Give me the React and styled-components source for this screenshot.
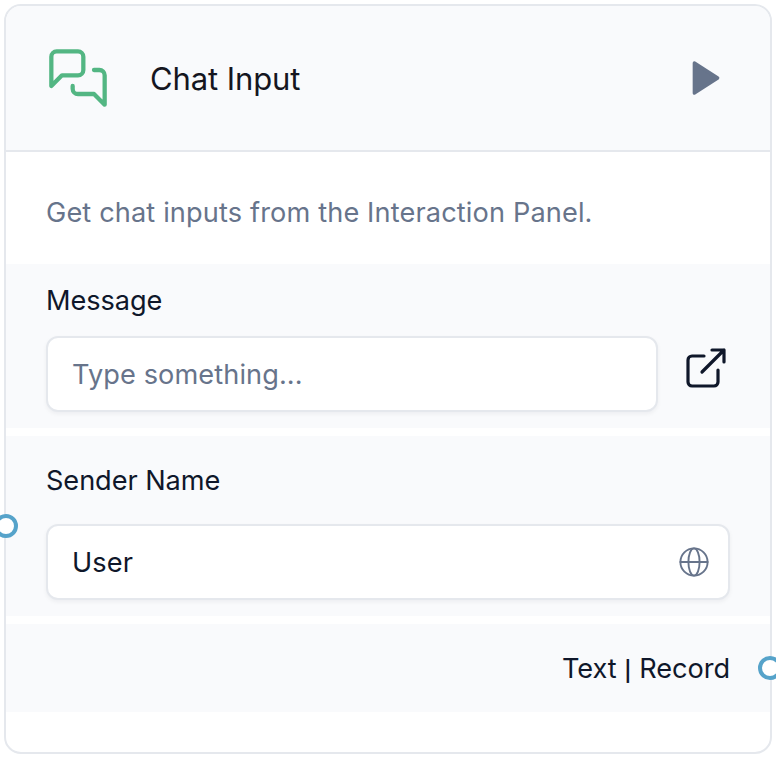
import React from "react";
import styled, { createGlobalStyle } from "styled-components";

const GlobalStyle = createGlobalStyle`
  * { box-sizing: border-box; }
  html, body { margin: 0; background: #fff; overflow: hidden; }
  body { font-family: Inter, "Liberation Sans", sans-serif; color: #0f172a; }
`;

const Canvas = styled.main`
  width: 776px;
  height: 758px;
  padding: 4px;
  overflow: hidden;
`;

const NodeCard = styled.article`
  width: 768px;
  height: 750px;
  display: flex;
  flex-direction: column;
  background: #fff;
  border: 2px solid #e5e8ed;
  border-radius: 17px;
`;

const Header = styled.header`
  height: 146px;
  flex: none;
  display: flex;
  align-items: center;
  padding: 0 44px 0 40px;
  background: #f9fafc;
  border-bottom: 2px solid #e5e8ed;
  border-radius: 15px 15px 0 0;
`;

const Title = styled.h1`
  margin: 2px 0 0 40px;
  flex: 1;
  font-size: 31px;
  line-height: 40px;
  font-weight: 400;
  letter-spacing: -0.1px;
  color: #15161f;
`;

const RunButton = styled.button`
  width: 40px;
  height: 40px;
  padding: 0;
  border: 0;
  background: none;
`;

const Icon = styled.svg`
  display: block;
  flex: none;
  fill: none;
  stroke: currentColor;
  stroke-linecap: round;
  stroke-linejoin: round;
`;

const ChatIcon = styled(Icon)`
  color: #53b683;
`;

const PlayIcon = styled(Icon)`
  color: #67748b;
  fill: currentColor;
`;

const Description = styled.p`
  margin: 0;
  height: 112px;
  flex: none;
  padding: 41px 40px 0;
  font-size: 27.15px;
  line-height: 40px;
  letter-spacing: 0.14px;
  color: #67748b;
`;

const Section = styled.section`
  position: relative;
  height: ${(p) => p.$height}px;
  flex: none;
  padding: ${(p) => p.$top}px 40px 0;
  margin-bottom: 8px;
  background: #f9fafc;
`;

const Label = styled.div`
  font-size: 27.15px;
  line-height: 40px;
  letter-spacing: -0.05px;
  margin-bottom: ${(p) => p.$gap}px;
`;

const Divider = styled.span`
  font-size: 20px;
  font-weight: 600;
  margin: 0 0.2px;
`;

const FieldRow = styled.div`
  display: flex;
  align-items: center;
`;

const Field = styled.div`
  display: flex;
  align-items: center;
  justify-content: space-between;
  width: ${(p) => p.$width}px;
  height: 76px;
  padding: 1px 19px 0 24px;
  border: 2px solid #e5e8ed;
  border-radius: 12px;
  background: #fff;
  box-shadow: 0 2px 4px rgba(15, 23, 42, 0.05);
  font-size: 27.15px;
  line-height: 40px;
  letter-spacing: 0.1px;
  color: ${(p) => (p.$muted ? "#67748b" : "#0f172a")};
`;

const ExpandIcon = styled(Icon)`
  margin: -12px 0 0 24px;
`;

const GlobeIcon = styled(Icon)`
  margin-top: -1px;
  color: #67748b;
`;

const OutputSection = styled(Section)`
  margin-bottom: 0;
  text-align: right;
`;

const Handle = styled.span`
  position: absolute;
  top: ${(p) => p.$top}px;
  ${(p) => p.$side}: -12px;
  width: 24px;
  height: 24px;
  border: 4px solid #56a3ca;
  border-radius: 50%;
  background: #fff;
`;

export default function App() {
  return (
    <>
      <GlobalStyle />
      <Canvas>
        <NodeCard>
          <Header>
            <ChatIcon width="64" height="64" viewBox="0 0 24 24" strokeWidth="1.6">
              <path d="M14 9a2 2 0 0 1-2 2H6l-4 4V4c0-1.1.9-2 2-2h8a2 2 0 0 1 2 2v5Z" />
              <path d="M18 9h2a2 2 0 0 1 2 2v11l-4-4h-6a2 2 0 0 1-2-2v-1" />
            </ChatIcon>
            <Title>Chat Input</Title>
            <RunButton aria-label="Run">
              <PlayIcon width="40" height="40" viewBox="0 0 24 24" strokeWidth="2">
                <path d="M5 3 19 12 5 21Z" />
              </PlayIcon>
            </RunButton>
          </Header>
          <Description>Get chat inputs from the Interaction Panel.</Description>
          <Section $height={164} $top={17}>
            <Label $gap={15}>Message</Label>
            <FieldRow>
              <Field $width={612} $muted>Type something...</Field>
              <ExpandIcon width="48" height="48" viewBox="0 0 24 24" strokeWidth="1.6">
                <path d="M18 13v6a2 2 0 0 1-2 2H5a2 2 0 0 1-2-2V8a2 2 0 0 1 2-2h6" />
                <path d="M15 3h6v6M10 14 21 3" />
              </ExpandIcon>
            </FieldRow>
          </Section>
          <Section $height={180} $top={25}>
            <Handle $side="left" $top={78} />
            <Label $gap={23}>Sender Name</Label>
            <Field $width={684}>
              User
              <GlobeIcon width="30" height="30" viewBox="0 0 30 30" strokeWidth="1.9">
                <circle cx="15" cy="15" r="13.6" />
                <ellipse cx="15" cy="15" rx="5.6" ry="13.6" />
                <path d="M1.4 15h27.2" />
              </GlobeIcon>
            </Field>
          </Section>
          <OutputSection $height={88} $top={25}>
            <Label $gap={0}>Text <Divider>|</Divider> Record</Label>
            <Handle $side="right" $top={32} />
          </OutputSection>
        </NodeCard>
      </Canvas>
    </>
  );
}
